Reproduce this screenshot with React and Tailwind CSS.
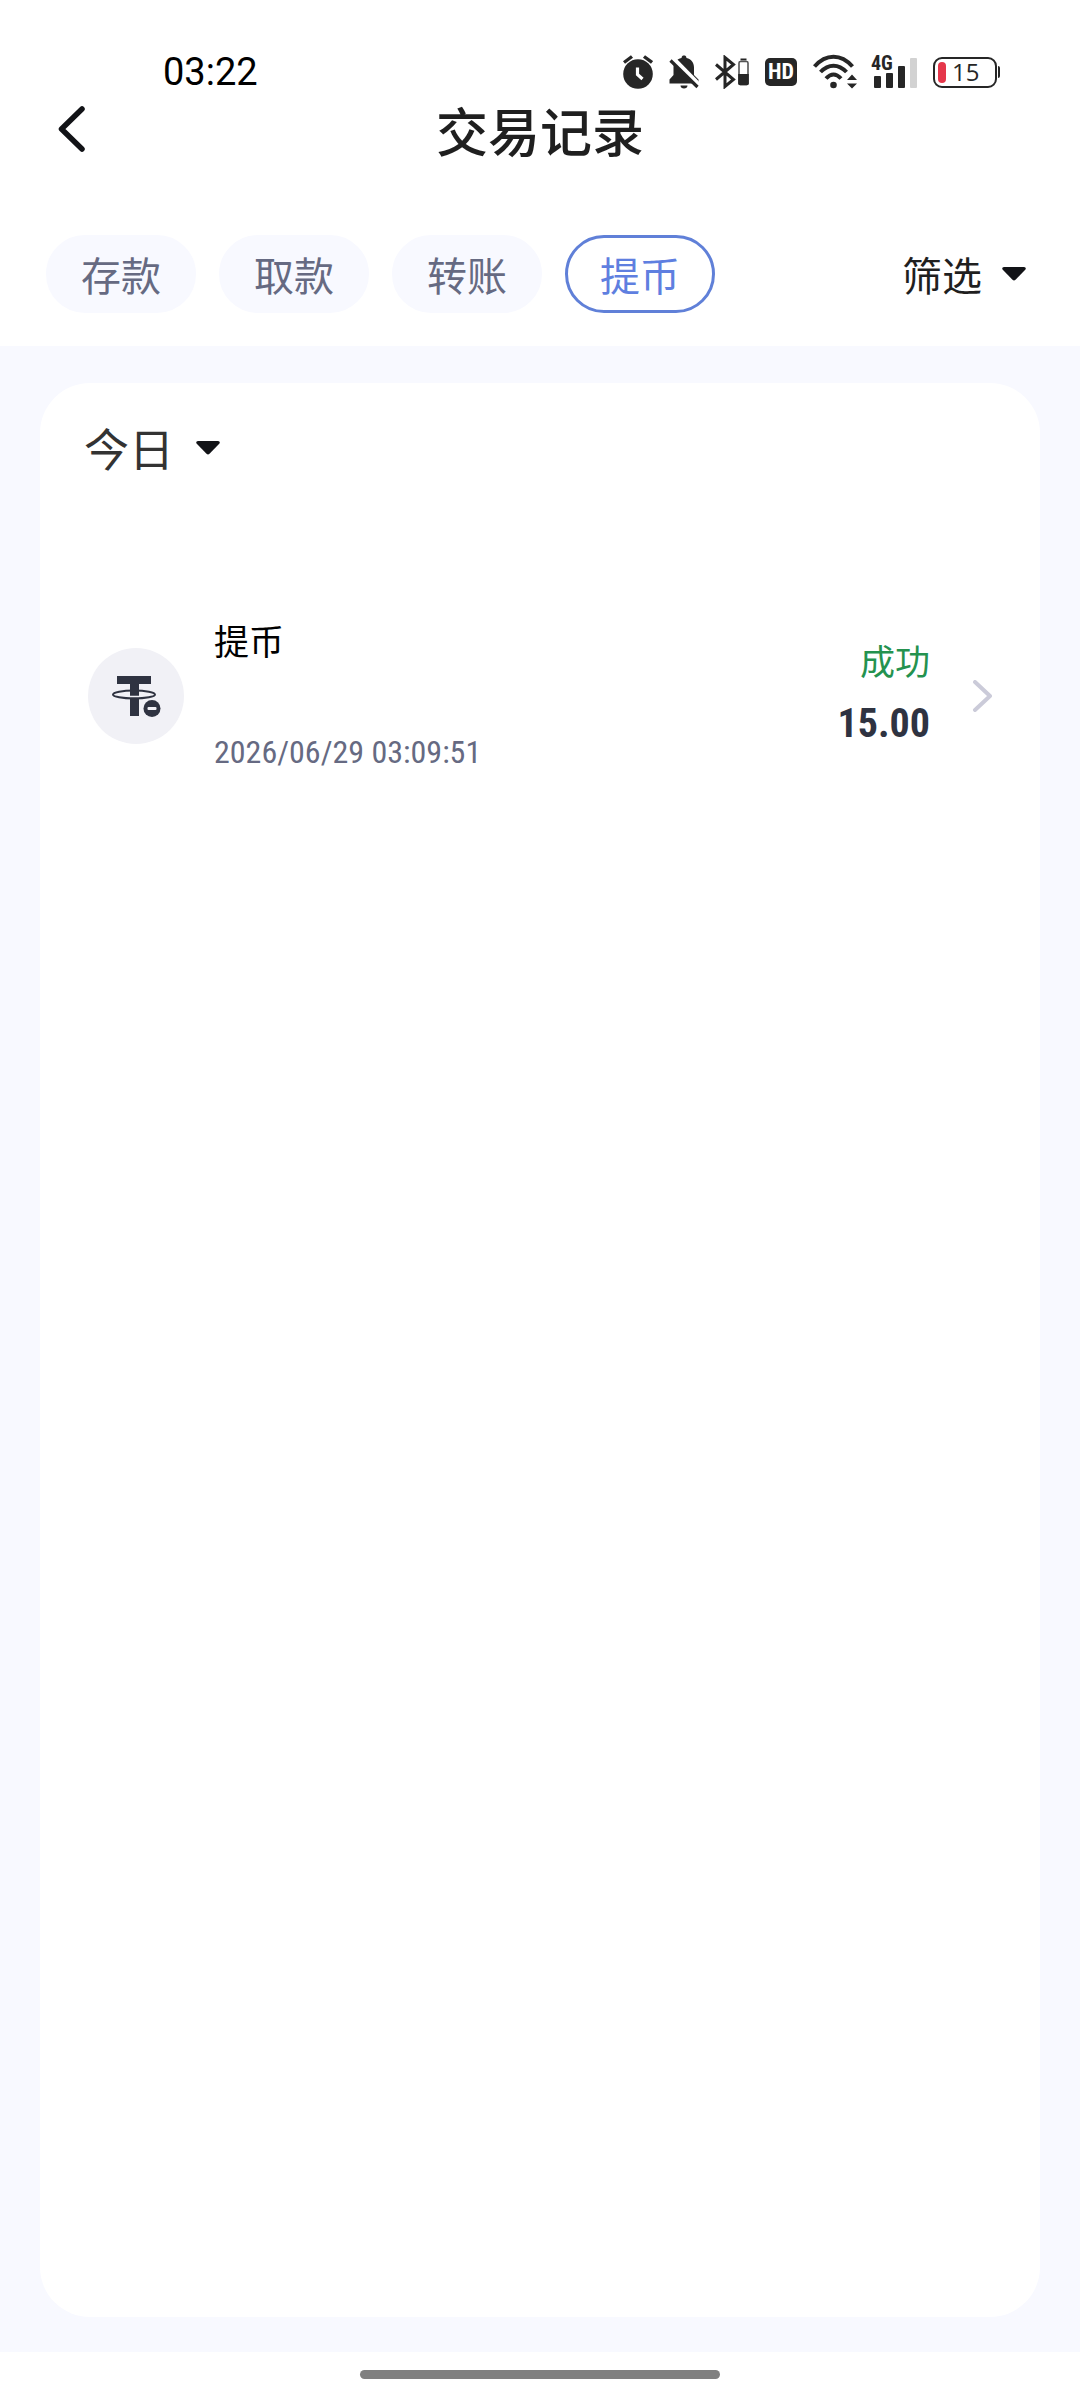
import React, { useState } from 'react';

const tabs = ['存款', '取款', '转账', '提币'];

const records = [
  { id: 1, title: '提币', time: '2026/06/29 03:09:51', status: '成功', amount: '15.00' }
];

function AlarmIcon() {
  return (
    <svg className="w-[30px] h-[34px]" viewBox="0 0 30 34" fill="none" aria-hidden="true">
      <circle cx="15" cy="19" r="14.8" fill="#262626" />
      <path d="M1 7.5 9 1.5M29 7.5 21 1.5" stroke="#262626" strokeWidth="3.4" />
      <path d="M14.5 12.5V19.5L19.5 24" stroke="#fff" strokeWidth="3.2" />
    </svg>
  );
}

function BellOffIcon() {
  return (
    <svg className="w-[30px] h-[34px]" viewBox="0 0 30 34" fill="none" aria-hidden="true">
      <path
        d="M12.5 3C12.8 1 13.6.5 15 .5S17.2 1 17.5 3C22.5 4.2 25 8 25 12.5V20L29.5 24.5V28.5H.5V24.5L4.5 20V12.5C4.5 8 7.5 4.2 12.5 3Z"
        fill="#262626"
      />
      <path d="M11.5 30.5H18.5C18.5 32.6 17 33.5 15 33.5S11.5 32.6 11.5 30.5Z" fill="#262626" />
      <path d="M0 2.5 4 0 31 27.5 28 34Z" fill="#fff" />
      <path d="M1.5 5.5 28.5 32" stroke="#262626" strokeWidth="3.2" />
    </svg>
  );
}

function BluetoothIcon() {
  return (
    <svg className="w-[34px] h-[34px]" viewBox="0 0 34 34" fill="none" aria-hidden="true">
      <path d="M1 9.5 18.5 24.5 10 31.5V2.5L18.5 9.5 1 24.5" stroke="#262626" strokeWidth="3" />
      <path d="M25.5 4.5H31.5" stroke="#262626" strokeWidth="2" />
      <rect x="24" y="6.5" width="9" height="23" rx="1.5" stroke="#555" strokeWidth="1.6" />
      <path d="M23.2 19H33.8V28.5Q33.8 30.3 32 30.3H25Q23.2 30.3 23.2 28.5Z" fill="#262626" />
    </svg>
  );
}

function WifiIcon() {
  return (
    <svg className="w-[42px] h-[34px] overflow-visible" viewBox="0 0 42 34" fill="none" aria-hidden="true">
      <path d="M1.5 11.5C13 -1.5 28 -1.5 39.5 11.5" stroke="#262626" strokeWidth="4" />
      <path d="M7.5 17C15.5 8.5 25.5 8.5 33.5 17" stroke="#262626" strokeWidth="4" />
      <path d="M13 23.5C18 18 23 18 28 23.5" stroke="#262626" strokeWidth="4" />
      <circle cx="20.5" cy="30" r="3.3" fill="#262626" />
      <path d="M34 25 39 19.5 44 25ZM34 28.5H44L39 33.5Z" fill="#262626" />
    </svg>
  );
}

function SignalIcon() {
  return (
    <svg className="w-[46px] h-[50px]" viewBox="0 -8 46 50" aria-hidden="true">
      <text x="0" y="15" fontSize="20" fontWeight="700" fontFamily="Roboto Condensed, Roboto, sans-serif" fill="#262626">
        4G
      </text>
      <rect x="3" y="21" width="7" height="12" rx="1" fill="#262626" />
      <rect x="15" y="18" width="7" height="15" rx="1" fill="#262626" />
      <rect x="27" y="11" width="7" height="22" rx="1" fill="#262626" />
      <rect x="39" y="3" width="7" height="30" rx="1" fill="#d2d2d2" />
    </svg>
  );
}

function BatteryIcon() {
  return (
    <div className="flex items-center gap-px">
      <div className="w-16 h-[31px] flex items-center gap-1.5 pl-[3px] border-2 border-[#262626] rounded-[9px]">
        <div className="w-2 h-[21px] bg-[#e5374b] rounded-[4px]" />
        <span className="font-['Open_Sans',sans-serif] text-2xl leading-6 text-[#262626]">15</span>
      </div>
      <div className="w-0.5 h-3 bg-[#262626] rounded-r-sm" />
    </div>
  );
}

function Caret() {
  return (
    <svg className="w-6 h-3.5" viewBox="0 0 24 14" aria-hidden="true">
      <path d="M2 0H22Q25 .8 23 3L13.5 12.7Q12 14.2 10.5 12.7L1 3Q-1 .8 2 0Z" fill="#121317" />
    </svg>
  );
}

function TetherIcon() {
  return (
    <svg className="w-24 h-24 shrink-0" viewBox="0 0 96 96" fill="none" aria-hidden="true">
      <circle cx="48" cy="48" r="48" fill="#f1f1f6" />
      <path d="M29 28H63V36H51V68H42V36H29Z" fill="#2f3341" />
      <ellipse cx="46" cy="46.5" rx="21" ry="4" stroke="#2f3341" strokeWidth="2" />
      <path d="M42 48.5H51" stroke="#f1f1f6" strokeWidth="1.5" />
      <path d="M43 41H50V46.5H43Z" fill="#2f3341" />
      <circle cx="64" cy="60.5" r="8.5" fill="#2f3341" />
      <rect x="59.5" y="59" width="9" height="3" rx="1" fill="#f1f1f6" />
    </svg>
  );
}

function StatusBar() {
  return (
    <div className="flex items-center justify-between h-10 pl-[163px] pr-20">
      <span className="font-[Roboto,sans-serif] text-[38px] leading-10 text-black">03:22</span>
      <div className="flex items-center gap-4">
        <AlarmIcon />
        <BellOffIcon />
        <BluetoothIcon />
        <span className="w-8 h-7 flex items-center justify-center rounded-[5px] bg-[#262626] font-['Roboto_Condensed',Roboto,sans-serif] text-[22px] leading-none font-bold text-white">
          HD
        </span>
        <WifiIcon />
        <SignalIcon />
        <BatteryIcon />
      </div>
    </div>
  );
}

function RecordRow({ record }) {
  return (
    <li>
      <button type="button" className="w-full flex items-center gap-[30px] text-left">
        <TetherIcon />
        <span className="flex-1 flex flex-col gap-16">
          <span className="text-[35px] leading-12 text-black">{record.title}</span>
          <span className="font-['Roboto_Condensed',Roboto,sans-serif] text-[32px] leading-12 text-[#666a82]">
            {record.time}
          </span>
        </span>
        <span className="flex flex-col items-end gap-1">
          <span className="text-[35px] leading-13 text-[#24924f]">{record.status}</span>
          <span className="font-['Roboto_Condensed',Roboto,sans-serif] text-[40px] leading-17 font-bold text-[#2f3341]">
            {record.amount}
          </span>
        </span>
        <svg className="w-5 h-8 ml-3" viewBox="0 0 20 32" fill="none" aria-hidden="true">
          <path d="M3 2 18 16 3 30" stroke="#cbcbd9" strokeWidth="4" strokeLinecap="round" strokeLinejoin="round" />
        </svg>
      </button>
    </li>
  );
}

export default function App() {
  const [active, setActive] = useState('提币');

  return (
    <div className="min-h-screen flex flex-col bg-white font-['Noto_Sans_CJK_SC',sans-serif]">
      <header className="pt-[52px] pb-[33px]">
        <StatusBar />

        {/* Title */}
        <div className="grid grid-cols-[1fr_auto_1fr] items-center h-[76px] px-14">
          <button type="button" aria-label="返回" className="w-8 h-12">
            <svg className="w-8 h-12" viewBox="0 0 32 48" fill="none">
              <path d="M26 3 5.5 23 26 43" stroke="#121317" strokeWidth="5.5" strokeLinecap="round" strokeLinejoin="round" />
            </svg>
          </button>
          <h1 className="text-[52px] leading-19 font-medium text-[#1f1f1f]">交易记录</h1>
        </div>

        {/* Tabs */}
        <div className="flex items-center justify-between pt-[67px] pl-[46px] pr-[54px]">
          <div className="flex gap-[23px]">
            {tabs.map((tab) => (
              <button
                key={tab}
                type="button"
                onClick={() => setActive(tab)}
                className={`w-[150px] h-[78px] rounded-full border-3 text-[40px] leading-none ${
                  active === tab
                    ? 'border-[#6080d8] bg-white text-[#5f7fe0]'
                    : 'border-[#f8f9ff] bg-[#f8f9ff] text-[#666a82]'
                }`}
              >
                {tab}
              </button>
            ))}
          </div>
          <button type="button" className="flex items-center gap-5 text-[40px] leading-none text-[#1f1f1f]">
            筛选
            <Caret />
          </button>
        </div>
      </header>

      <main className="flex-1 flex flex-col bg-[#f8f9ff] px-10 pt-[37px] pb-[35px]">
        <section className="flex-1 bg-white rounded-[50px] px-12 pt-[33px]">
          <button type="button" className="flex items-center gap-[22px] -ml-1 text-[45px] leading-16 text-[#333]">
            今日
            <Caret />
          </button>
          <ul className="pt-34">
            {records.map((record) => (
              <RecordRow key={record.id} record={record} />
            ))}
          </ul>
        </section>
      </main>

      <footer className="flex justify-center h-12 pt-[18px]">
        <div className="w-1/3 h-[9px] rounded-full bg-[#808080]" />
      </footer>
    </div>
  );
}
